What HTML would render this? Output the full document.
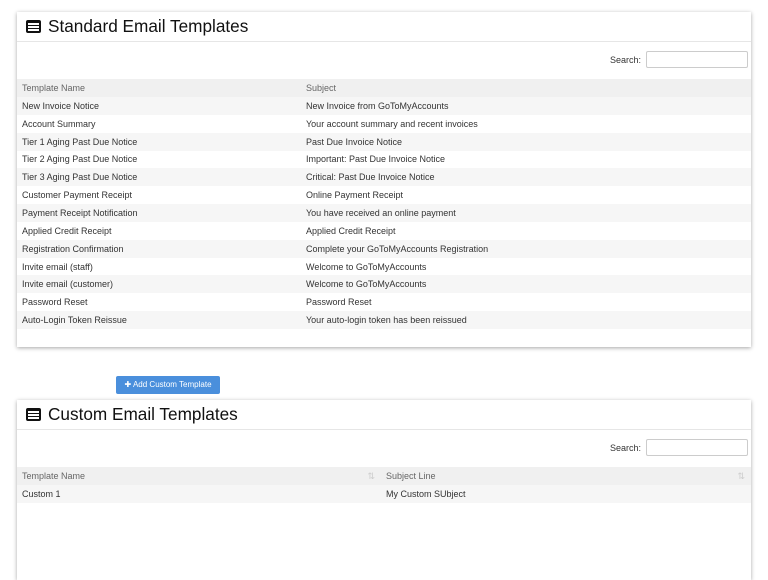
<!DOCTYPE html>
<html><head><style>
body{margin:0;background:#fff;font-family:"Liberation Sans",sans-serif;color:#333;width:768px;height:570px;overflow:hidden;position:relative}
.panel{position:absolute;left:17px;width:734px;background:#fff;box-shadow:0 1px 4px rgba(0,0,0,.35)}
.hdr{height:29px;border-bottom:1px solid #e6e6e6;font-size:17.2px;color:#111;padding-left:9px;line-height:31px;display:flex;align-items:center}
.ico{display:inline-block;width:15px;height:13px;background:#111;border-radius:2px;margin-right:7px;position:relative}
.ico i{position:absolute;left:2px;right:2px;height:2px;background:#fff}
.srch{position:absolute;right:3px;font-size:9px;display:flex;align-items:center}
.srch span{margin-right:5px}
.srch div{width:100px;height:15px;border:1px solid #ccc;border-radius:2px}
table{position:absolute;left:0;width:734px;border-collapse:collapse;font-size:9px}
td{height:17.85px;padding:0 0 0 5px;white-space:nowrap}
tr.h td{background:#f0f0f0;color:#666;height:18px}
tr.g td{background:#f6f6f6}
.btn{position:absolute;left:116px;top:376px;width:104px;height:18px;background:#4a8fdc;color:#fff;font-size:8px;line-height:18px;text-align:center;border-radius:2px}
.s{color:#ccc;float:right;margin-right:6px;font-size:9px}
</style></head><body>
<div class="panel" style="top:12px;height:335px">
<div class="hdr"><span class="ico"><i style="top:3px"></i><i style="top:6px"></i><i style="top:9px"></i></span>Standard Email Templates</div>
<div class="srch" style="top:39px"><span>Search:</span><div></div></div>
<table style="top:67px">
<tr class="h"><td style="width:279px">Template Name</td><td>Subject</td></tr>
<tr class="g"><td>New Invoice Notice</td><td>New Invoice from GoToMyAccounts</td></tr>
<tr><td>Account Summary</td><td>Your account summary and recent invoices</td></tr>
<tr class="g"><td>Tier 1 Aging Past Due Notice</td><td>Past Due Invoice Notice</td></tr>
<tr><td>Tier 2 Aging Past Due Notice</td><td>Important: Past Due Invoice Notice</td></tr>
<tr class="g"><td>Tier 3 Aging Past Due Notice</td><td>Critical: Past Due Invoice Notice</td></tr>
<tr><td>Customer Payment Receipt</td><td>Online Payment Receipt</td></tr>
<tr class="g"><td>Payment Receipt Notification</td><td>You have received an online payment</td></tr>
<tr><td>Applied Credit Receipt</td><td>Applied Credit Receipt</td></tr>
<tr class="g"><td>Registration Confirmation</td><td>Complete your GoToMyAccounts Registration</td></tr>
<tr><td>Invite email (staff)</td><td>Welcome to GoToMyAccounts</td></tr>
<tr class="g"><td>Invite email (customer)</td><td>Welcome to GoToMyAccounts</td></tr>
<tr><td>Password Reset</td><td>Password Reset</td></tr>
<tr class="g"><td>Auto-Login Token Reissue</td><td>Your auto-login token has been reissued</td></tr>
</table>
</div>
<div class="btn">✚ Add Custom Template</div>
<div class="panel" style="top:400px;height:180px">
<div class="hdr"><span class="ico"><i style="top:3px"></i><i style="top:6px"></i><i style="top:9px"></i></span>Custom Email Templates</div>
<div class="srch" style="top:39px"><span>Search:</span><div></div></div>
<table style="top:67px">
<tr class="h"><td style="width:359px">Template Name<span class="s">⇅</span></td><td>Subject Line<span class="s">⇅</span></td></tr>
<tr class="g"><td>Custom 1</td><td>My Custom SUbject</td></tr>
</table>
</div>
</body></html>
